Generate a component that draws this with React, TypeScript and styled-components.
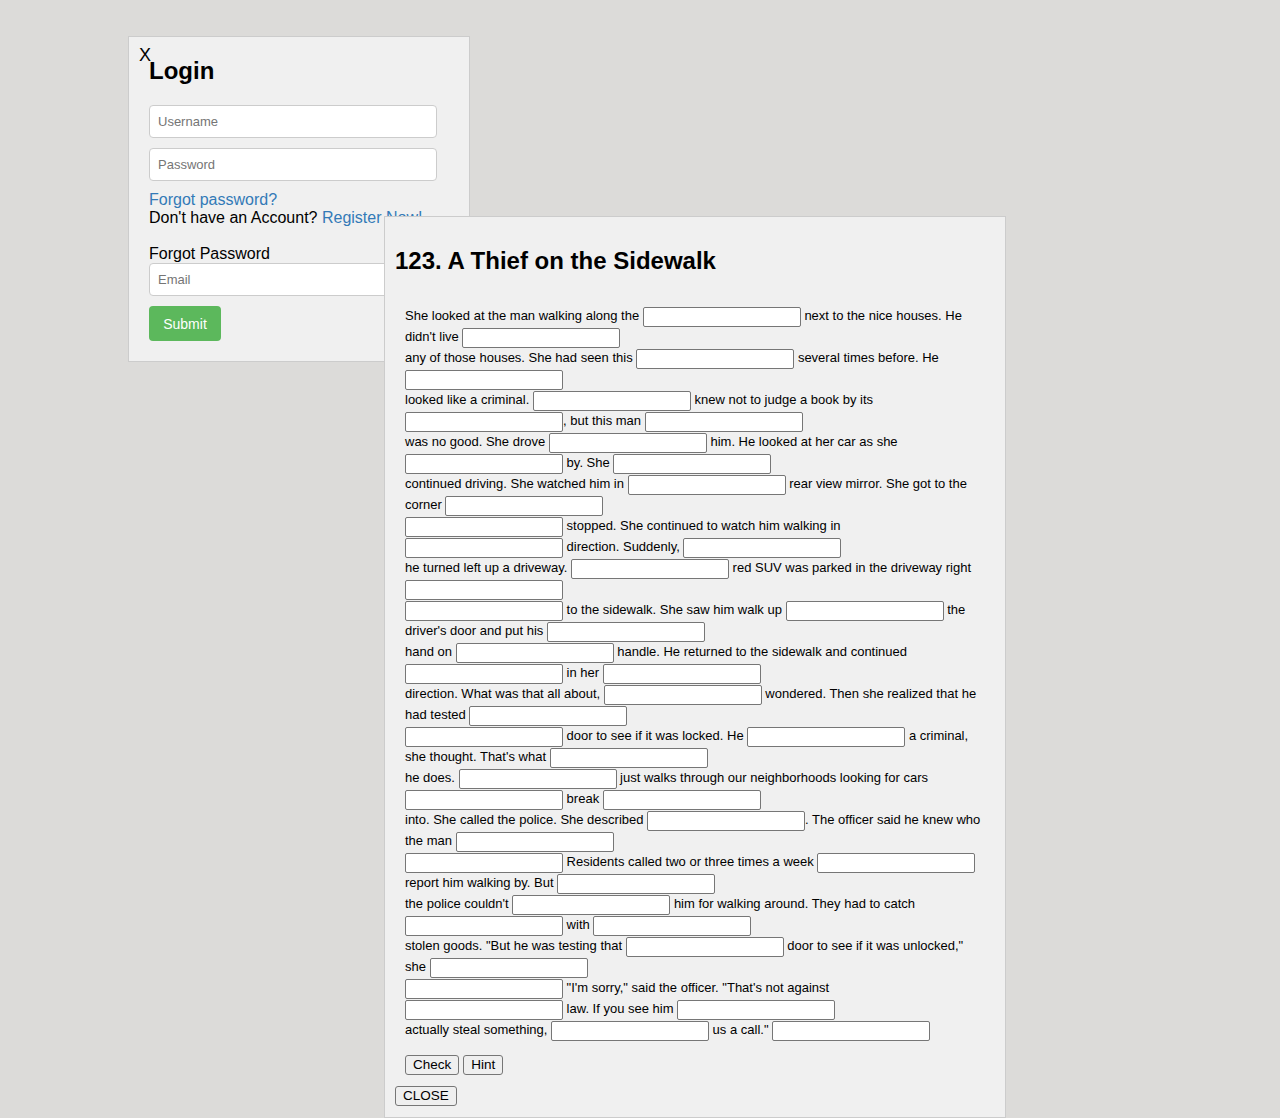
import React from "react";
import styled, { createGlobalStyle } from "styled-components";

const GlobalStyle = createGlobalStyle`
  html, body {
    margin: 0;
    padding: 0;
  }
  body {
    background: #dcdbd9;
    font-family: "Liberation Sans", Arial, Helvetica, sans-serif;
    color: #000;
    min-height: 1118px;
  }
  #root {
    position: relative;
    width: 1280px;
    height: 1118px;
    overflow: hidden;
  }
`;

/* ---------- Login window ---------- */

const LoginWindow = styled.div`
  position: absolute;
  left: 128px;
  top: 36px;
  width: 342px;
  box-sizing: border-box;
  background: #f0f0f0;
  border: 1px solid #cccccc;
  padding: 20px 32px 20px 20px;
  display: flex;
  flex-direction: column;
`;

const CloseX = styled.span`
  position: absolute;
  left: 10px;
  top: 8px;
  font-size: 18px;
  line-height: 20px;
  cursor: pointer;
`;

const LoginTitle = styled.h2`
  margin: 0 0 20px 0;
  font-size: 24px;
  line-height: 28px;
  font-weight: bold;
`;

const TextField = styled.input<{ $gap?: number }>`
  box-sizing: border-box;
  width: 288px;
  height: 33px;
  margin: 0 0 ${(p) => p.$gap ?? 0}px 0;
  padding: 6px 8px;
  border: 1px solid #cccccc;
  border-radius: 4px;
  background: #fff;
  font-family: inherit;
  font-size: 13px;
  color: #333;
  outline: none;
  &::placeholder {
    color: #757575;
  }
`;

const TextLine = styled.div<{ $top?: number }>`
  margin-top: ${(p) => p.$top ?? 0}px;
  font-size: 16px;
  line-height: 18px;
  white-space: nowrap;
`;

const Link = styled.a`
  color: #337ab7;
  text-decoration: none;
  cursor: pointer;
`;

const SubmitButton = styled.button`
  align-self: flex-start;
  margin-top: 10px;
  width: 72px;
  height: 35px;
  border: none;
  border-radius: 4px;
  background: #5cb85c;
  color: #fff;
  font-family: inherit;
  font-size: 14px;
  cursor: pointer;
`;

/* ---------- Exercise dialog ---------- */

const Dialog = styled.div`
  position: absolute;
  left: 384px;
  top: 216px;
  width: 622px;
  height: 902px;
  box-sizing: border-box;
  background: #f0f0f0;
  border: 1px solid #cccccc;
  padding: 30px 10px 0 10px;
`;

const DialogTitle = styled.h2`
  margin: 0 0 30px 0;
  font-size: 24px;
  line-height: 28px;
  font-weight: bold;
`;

const Passage = styled.div`
  margin-left: 10px;
  font-size: 13px;
`;

const PassageLine = styled.div`
  height: 21px;
  line-height: 21px;
  white-space: pre;
`;

const Blank = styled.input`
  box-sizing: border-box;
  width: 158px;
  height: 20px;
  margin: 0;
  padding: 1px 3px;
  vertical-align: middle;
  border: 1px solid #767676;
  border-radius: 2px;
  background: #fff;
  font-family: inherit;
  font-size: 13px;
  outline: none;
`;

const ButtonRow = styled.div<{ $indent?: number; $top: number }>`
  display: flex;
  gap: 4px;
  margin-top: ${(p) => p.$top}px;
  margin-left: ${(p) => p.$indent ?? 0}px;
`;

const PlainButton = styled.button`
  box-sizing: border-box;
  height: 20px;
  padding: 0 7px;
  border: 1px solid #767676;
  border-radius: 3px;
  background: #efefef;
  font-family: inherit;
  font-size: 13.5px;
  line-height: 18px;
  color: #000;
  cursor: pointer;
`;

const LINES: string[] = [
  "She looked at the man walking along the § next to the nice houses. He",
  "didn't live §",
  "any of those houses. She had seen this § several times before. He",
  "§",
  "looked like a criminal. § knew not to judge a book by its",
  "§, but this man §",
  "was no good. She drove § him. He looked at her car as she",
  "§ by. She §",
  "continued driving. She watched him in § rear view mirror. She got to the",
  "corner §",
  "§ stopped. She continued to watch him walking in",
  "§ direction. Suddenly, §",
  "he turned left up a driveway. § red SUV was parked in the driveway right",
  "§",
  "§ to the sidewalk. She saw him walk up § the",
  "driver's door and put his §",
  "hand on § handle. He returned to the sidewalk and continued",
  "§ in her §",
  "direction. What was that all about, § wondered. Then she realized that he",
  "had tested §",
  "§ door to see if it was locked. He § a criminal,",
  "she thought. That's what §",
  "he does. § just walks through our neighborhoods looking for cars",
  "§ break §",
  "into. She called the police. She described §. The officer said he knew who",
  "the man §",
  "§ Residents called two or three times a week §",
  "report him walking by. But §",
  "the police couldn't § him for walking around. They had to catch",
  "§ with §",
  "stolen goods. \"But he was testing that § door to see if it was unlocked,\"",
  "she §",
  "§ \"I'm sorry,\" said the officer. \"That's not against",
  "§ law. If you see him §",
  "actually steal something, § us a call.\" §",
];

function renderLine(line: string, li: number) {
  const parts = line.split("§");
  const out: React.ReactNode[] = [];
  parts.forEach((p, i) => {
    if (p) out.push(<React.Fragment key={`t${i}`}>{p}</React.Fragment>);
    if (i < parts.length - 1) out.push(<Blank key={`b${i}`} type="text" aria-label={`blank ${li}-${i}`} />);
  });
  return <PassageLine key={li}>{out}</PassageLine>;
}

export default function App() {
  return (
    <>
      <GlobalStyle />
      <LoginWindow>
        <CloseX>X</CloseX>
        <LoginTitle>Login</LoginTitle>
        <TextField type="text" placeholder="Username" $gap={10} />
        <TextField type="password" placeholder="Password" />
        <TextLine $top={10}>
          <Link>Forgot password?</Link>
        </TextLine>
        <TextLine>
          Don't have an Account? <Link>Register Now!</Link>
        </TextLine>
        <TextLine $top={18}>Forgot Password</TextLine>
        <TextField type="email" placeholder="Email" />
        <SubmitButton>Submit</SubmitButton>
      </LoginWindow>

      <Dialog>
        <DialogTitle>123. A Thief on the Sidewalk</DialogTitle>
        <Passage>{LINES.map(renderLine)}</Passage>
        <ButtonRow $indent={10} $top={15}>
          <PlainButton>Check</PlainButton>
          <PlainButton>Hint</PlainButton>
        </ButtonRow>
        <ButtonRow $top={11}>
          <PlainButton>CLOSE</PlainButton>
        </ButtonRow>
      </Dialog>
    </>
  );
}
